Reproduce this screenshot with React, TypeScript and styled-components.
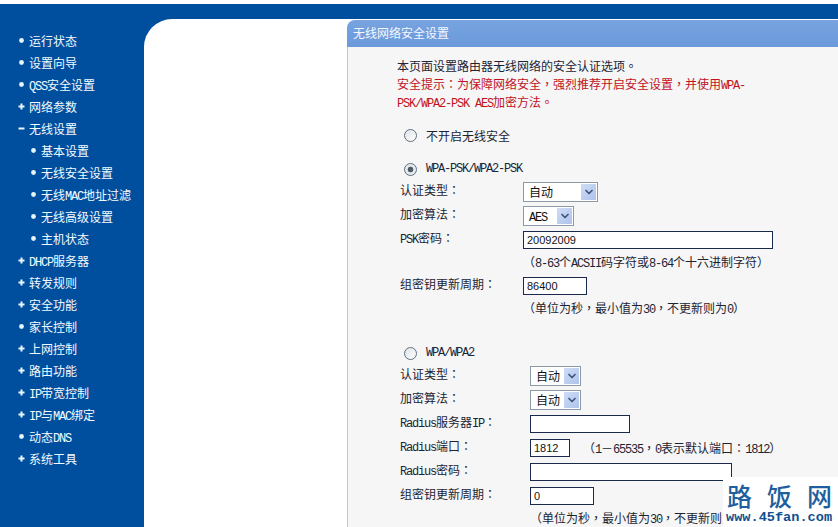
import styled, { createGlobalStyle } from 'styled-components';
import { ChevronDown } from 'lucide-react';

const Global = createGlobalStyle`
  html, body {
    margin: 0;
    height: 527px;
    overflow: hidden;
    background: #fff;
    font-family: "Noto Sans CJK SC", "Liberation Sans", sans-serif;
    font-size: 12px;
  }
`;

const Page = styled.div`
  height: 527px;
  padding-top: 4px;
  box-sizing: border-box;
  display: flex;
  flex-direction: column;
  position: relative;
  overflow: hidden;
`;

const TopBar = styled.div`
  height: 15px;
  flex: none;
  background: #004f9f;
`;

const Body = styled.div`
  flex: 1;
  display: flex;
  background: #004f9f;
  min-height: 0;
`;

const Sidebar = styled.nav`
  width: 144px;
  flex: none;
  padding-top: 10px;
  box-sizing: border-box;
`;

const NavItem = styled.div<{ $sub?: boolean }>`
  height: 22px;
  display: flex;
  align-items: center;
  gap: 4px;
  padding-left: ${(p) => (p.$sub ? '30px' : '18px')};
  color: #f2fbff;
  white-space: nowrap;
`;

const Main = styled.main`
  flex: 1;
  min-width: 0;
  display: flex;
  background: #fff;
  border-top-left-radius: 28px;
  padding: 1px 0 0 203px;
`;

const Panel = styled.section`
  flex: 1;
  min-width: 0;
  display: flex;
  flex-direction: column;
`;

const Title = styled.h1`
  margin: 0;
  height: 27px;
  box-sizing: border-box;
  flex: none;
  display: flex;
  align-items: center;
  padding: 0 0 2px 6px;
  font-size: 12px;
  font-weight: normal;
  color: #f4f8ff;
  background: linear-gradient(#78a3df, #6a99db);
  border-top-left-radius: 8px;
`;

const Content = styled.div`
  flex: 1;
  background: #f6f6f6;
  border-left: 1px solid #efb98c;
  padding: 10px 0 0 49px;
`;

const Intro = styled.div`
  margin-bottom: 13px;
  color: #1c2433;
`;

const IntroLine = styled.div<{ $warn?: boolean }>`
  height: 18px;
  line-height: 18px;
  white-space: nowrap;
  color: ${(p) => (p.$warn ? '#c1121f' : 'inherit')};
`;

const RadioRow = styled.label<{ $gap?: number }>`
  height: 22px;
  display: flex;
  align-items: center;
  gap: 9px;
  padding-left: 7px;
  margin-top: ${(p) => p.$gap ?? 0}px;
  color: #1c2433;
`;

const Radio = styled.input.attrs({ type: 'radio', readOnly: true })`
  appearance: none;
  width: 13px;
  height: 13px;
  margin: 0;
  border: 1px solid #5f6f80;
  border-radius: 50%;
  background: linear-gradient(135deg, #dfe3e6, #ffffff);

  &:checked {
    background: radial-gradient(circle, #4a5a66 0 2.5px, #e6eaec 3.2px);
  }
`;

const Row = styled.div<{ $h?: number; $label?: number }>`
  height: ${(p) => p.$h ?? 24}px;
  display: grid;
  grid-template-columns: ${(p) => p.$label ?? 123}px auto;
  justify-content: start;
  align-items: center;
  padding-left: 3px;
  color: #1c2433;
  white-space: nowrap;
`;

const Label = styled.span`
  padding-bottom: 5px;
`;

const Field = styled.div`
  display: flex;
  align-items: center;
  gap: 13px;
  grid-column: 2;
`;

const SelectBox = styled.div<{ $w: number }>`
  width: ${(p) => p.$w}px;
  height: 20px;
  box-sizing: border-box;
  border: 1px solid #8b9aa6;
  background: #fff;
  display: flex;
  align-items: center;
  justify-content: space-between;
  padding: 1px 1px 1px 5px;
  color: #111;
`;

const SelectValue = styled.span`
  padding-bottom: 2px;
`;

const Arrow = styled.span`
  width: 15px;
  height: 16px;
  display: flex;
  align-items: center;
  justify-content: center;
  background: linear-gradient(135deg, #cfdcf5, #aec3ec);
  color: #3f5680;
`;

const TextInput = styled.input.attrs({ type: 'text', readOnly: true })<{ $w: number }>`
  width: ${(p) => p.$w}px;
  height: 18px;
  box-sizing: border-box;
  margin: 0;
  padding: 0 3px;
  border: 1px solid #1b2a4c;
  background: #fff;
  font-family: "Liberation Sans", sans-serif;
  font-size: 11px;
  color: #111;
  outline: none;
`;

const Hint = styled.span`
  color: #1c2433;
  padding-bottom: 2px;
`;

const Latin = styled.span`
  font-family: "Liberation Mono", monospace;
  font-size: 12px;
  letter-spacing: -1.2px;
  line-height: 1;
`;

// TC puts these marks in the middle of the cell, as the router's font does
const Punct = styled.span`
  font-family: "Noto Sans CJK TC", sans-serif;
  line-height: 1;
`;

const Watermark = styled.div`
  position: absolute;
  right: 0;
  bottom: 0;
  width: 115px;
  height: 50px;
  background: #fff;
  color: #1f5f9e;
`;

const WatermarkName = styled.div`
  display: flex;
  justify-content: space-between;
  padding: 2px 6px 0 4px;
  font-size: 25px;
  line-height: 32px;
  font-weight: 500;
`;

const WatermarkUrl = styled.div`
  font-family: "Liberation Mono", monospace;
  font-size: 13.6px;
  line-height: 14px;
  font-weight: 700;
  padding-left: 3px;
  color: #0f4f8f;
`;

// latin runs and centred punctuation get their own span next to the CJK text
function Mixed({ text }: { text: string }) {
  return (
    <>
      {text.split(/([\x20-\x7e]+|[：，。])/).map((part, i) => {
        if (i % 2 === 0) return part;
        return /[：，。]/.test(part) ? (
          <Punct key={i}>{part}</Punct>
        ) : (
          <Latin key={i}>{part}</Latin>
        );
      })}
    </>
  );
}

function Marker({ kind }: { kind: 'dot' | 'plus' | 'minus' }) {
  return (
    <svg width="7" height="7" viewBox="0 0 7 7" fill="#e6f6fa">
      {kind === 'dot' && <circle cx="3.5" cy="3.5" r="2.4" />}
      {kind !== 'dot' && <rect x="0.5" y="2.5" width="6" height="2" />}
      {kind === 'plus' && <rect x="2.5" y="0.5" width="2" height="6" />}
    </svg>
  );
}

function Select({ w, value }: { w: number; value: string }) {
  return (
    <SelectBox $w={w}>
      <SelectValue>
        <Mixed text={value} />
      </SelectValue>
      <Arrow>
        <ChevronDown size={12} strokeWidth={3.5} />
      </Arrow>
    </SelectBox>
  );
}

type NavEntry = { label: string; kind: 'dot' | 'plus' | 'minus'; sub?: boolean };

const nav: NavEntry[] = [
  { label: '运行状态', kind: 'dot' },
  { label: '设置向导', kind: 'dot' },
  { label: 'QSS安全设置', kind: 'dot' },
  { label: '网络参数', kind: 'plus' },
  { label: '无线设置', kind: 'minus' },
  { label: '基本设置', kind: 'dot', sub: true },
  { label: '无线安全设置', kind: 'dot', sub: true },
  { label: '无线MAC地址过滤', kind: 'dot', sub: true },
  { label: '无线高级设置', kind: 'dot', sub: true },
  { label: '主机状态', kind: 'dot', sub: true },
  { label: 'DHCP服务器', kind: 'plus' },
  { label: '转发规则', kind: 'plus' },
  { label: '安全功能', kind: 'plus' },
  { label: '家长控制', kind: 'dot' },
  { label: '上网控制', kind: 'plus' },
  { label: '路由功能', kind: 'plus' },
  { label: 'IP带宽控制', kind: 'plus' },
  { label: 'IP与MAC绑定', kind: 'plus' },
  { label: '动态DNS', kind: 'dot' },
  { label: '系统工具', kind: 'plus' },
];

export default function App() {
  return (
    <Page>
      <Global />
      <TopBar />
      <Body>
        <Sidebar>
          {nav.map((item) => (
            <NavItem key={item.label} $sub={item.sub}>
              <Marker kind={item.kind} />
              <span>
                <Mixed text={item.label} />
              </span>
            </NavItem>
          ))}
        </Sidebar>
        <Main>
          <Panel>
            <Title>无线网络安全设置</Title>
            <Content>
              <Intro>
                <IntroLine>
                  <Mixed text="本页面设置路由器无线网络的安全认证选项。" />
                </IntroLine>
                <IntroLine $warn>
                  <Mixed text="安全提示：为保障网络安全，强烈推荐开启安全设置，并使用WPA-" />
                </IntroLine>
                <IntroLine $warn>
                  <Mixed text="PSK/WPA2-PSK AES加密方法。" />
                </IntroLine>
              </Intro>

              <RadioRow>
                <Radio name="mode" />
                不开启无线安全
              </RadioRow>

              <RadioRow $gap={12}>
                <Radio name="mode" defaultChecked />
                <Latin>WPA-PSK/WPA2-PSK</Latin>
              </RadioRow>
              <Row>
                <Label><Mixed text="认证类型：" /></Label>
                <Select w={75} value="自动" />
              </Row>
              <Row>
                <Label><Mixed text="加密算法：" /></Label>
                <Select w={51} value="AES" />
              </Row>
              <Row $h={23}>
                <Label><Mixed text="PSK密码：" /></Label>
                <TextInput $w={250} defaultValue="20092009" />
              </Row>
              <Row $h={23}>
                <Field>
                  <Hint><Mixed text="（8-63个ACSII码字符或8-64个十六进制字符）" /></Hint>
                </Field>
              </Row>
              <Row $h={23}>
                <Label><Mixed text="组密钥更新周期：" /></Label>
                <TextInput $w={64} defaultValue="86400" />
              </Row>
              <Row $h={22}>
                <Field>
                  <Hint><Mixed text="（单位为秒，最小值为30，不更新则为0）" /></Hint>
                </Field>
              </Row>

              <RadioRow $gap={23}>
                <Radio name="mode" />
                <Latin>WPA/WPA2</Latin>
              </RadioRow>
              <Row $label={130}>
                <Label><Mixed text="认证类型：" /></Label>
                <Select w={51} value="自动" />
              </Row>
              <Row $label={130}>
                <Label><Mixed text="加密算法：" /></Label>
                <Select w={51} value="自动" />
              </Row>
              <Row $label={130}>
                <Label><Mixed text="Radius服务器IP：" /></Label>
                <TextInput $w={100} />
              </Row>
              <Row $label={130}>
                <Label><Mixed text="Radius端口：" /></Label>
                <Field>
                  <TextInput $w={40} defaultValue="1812" />
                  <Hint><Mixed text="（1－65535，0表示默认端口：1812）" /></Hint>
                </Field>
              </Row>
              <Row $label={130}>
                <Label><Mixed text="Radius密码：" /></Label>
                <TextInput $w={202} />
              </Row>
              <Row $label={130}>
                <Label><Mixed text="组密钥更新周期：" /></Label>
                <TextInput $w={64} defaultValue="0" />
              </Row>
              <Row $label={130} $h={20}>
                <Field>
                  <Hint><Mixed text="（单位为秒，最小值为30，不更新则为0）" /></Hint>
                </Field>
              </Row>
            </Content>
          </Panel>
        </Main>
      </Body>
      <Watermark>
        <WatermarkName>
          <span>路</span>
          <span>饭</span>
          <span>网</span>
        </WatermarkName>
        <WatermarkUrl>www.45fan.com</WatermarkUrl>
      </Watermark>
    </Page>
  );
}
